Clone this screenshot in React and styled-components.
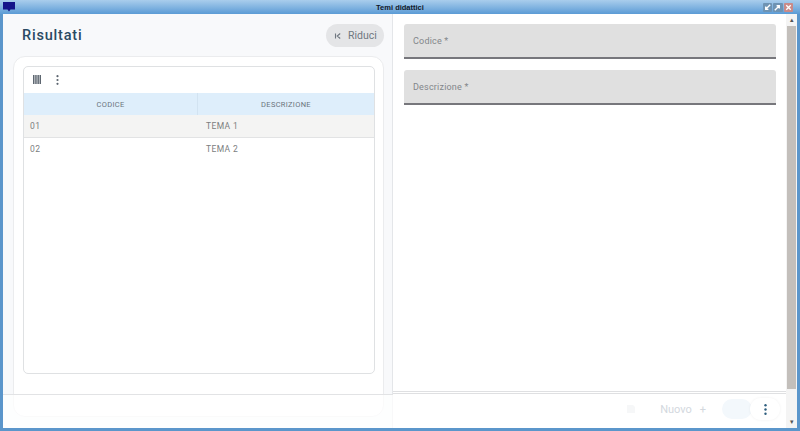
import React from 'react'
import styled, { createGlobalStyle } from 'styled-components'

const GlobalStyle = createGlobalStyle`
  html, body {
    margin: 0;
    padding: 0;
    width: 800px;
    height: 431px;
    overflow: hidden;
    background: #fff;
    font-family: Roboto, "Liberation Sans", sans-serif;
  }
  * { box-sizing: border-box; }
`

const rows = [
  { code: '01', name: 'TEMA 1', striped: true },
  { code: '02', name: 'TEMA 2' },
]

const App = () => (
  <Window>
    <GlobalStyle />
    <TitleBar>
      <AppIcon viewBox="0 0 12 10">
        <path d="M0 0h12v7.500H7.500L6 9.500 4.500 7.500H0z" fill="#14148a" />
      </AppIcon>
      <WindowTitle>Temi didattici</WindowTitle>
      <WindowButtons>
        <WindowButton><ArrowGlyph d="M8 2 3 7M3 4v3h3" /></WindowButton>
        <WindowButton><ArrowGlyph d="M2 8l5-5M4 3h3v3" /></WindowButton>
        <WindowButton $close><ArrowGlyph d="M2.500 2.500l5 5M7.500 2.500l-5 5" /></WindowButton>
      </WindowButtons>
    </TitleBar>

    <Body>
      <LeftPanel>
        <PanelHeader>
          <Title>Risultati</Title>
          <CollapseButton>
            <svg width="8" height="8" viewBox="0 0 8 8" fill="none" stroke="#6f7780" strokeWidth="1.100">
              <path d="M1.500 1.500v5M6.200 1.500 3.200 4l3 2.500" />
            </svg>
            Riduci
          </CollapseButton>
        </PanelHeader>
        <Card>
          <TableBox>
            <Toolbar>
              <svg width="8" height="9" viewBox="0 0 8 9" fill="#5d6670">
                <path d="M0 0h1.500v9H0zM2.200 0h1.500v9H2.200zM4.400 0h1.500v9H4.400zM6.500 0H8v9H6.500z" />
              </svg>
              <svg width="3" height="10" viewBox="0 0 3 10" fill="#5d6670">
                <circle cx="1.500" cy="1.200" r="1.100" />
                <circle cx="1.500" cy="5" r="1.100" />
                <circle cx="1.500" cy="8.800" r="1.100" />
              </svg>
            </Toolbar>
            <HeaderRow>
              <HeaderCell>CODICE</HeaderCell>
              <HeaderCell>DESCRIZIONE</HeaderCell>
            </HeaderRow>
            {rows.map(row => (
              <Row key={row.code} $striped={row.striped}>
                <Cell>{row.code}</Cell>
                <Cell>{row.name}</Cell>
              </Row>
            ))}
          </TableBox>
        </Card>
      </LeftPanel>

      <RightPanel>
        <Field>Codice *</Field>
        <Field>Descrizione *</Field>
      </RightPanel>

      <Scrollbar>
        <ScrollArrow>▴</ScrollArrow>
        <ScrollThumb />
        <ScrollArrow>▾</ScrollArrow>
      </Scrollbar>

      <Footer>
        <FooterLeft />
        <FooterRight>
          <FaintIcon viewBox="0 0 10 10">
            <path d="M1 1h6l2 2v6H1z" fill="#f6f7f8" />
          </FaintIcon>
          <FooterAction>Nuovo<span>+</span></FooterAction>
          <SaveGhost />
          <MoreButton>
            <svg width="3" height="11" viewBox="0 0 3 11" fill="#2f5f7f">
              <circle cx="1.500" cy="1.300" r="1.200" />
              <circle cx="1.500" cy="5.500" r="1.200" />
              <circle cx="1.500" cy="9.700" r="1.200" />
            </svg>
          </MoreButton>
        </FooterRight>
      </Footer>
    </Body>
  </Window>
)

export default App

const Window = styled.div`
  width: 800px;
  height: 431px;
  display: flex;
  flex-direction: column;
  background: #5b96cb;
`

const TitleBar = styled.div`
  position: relative;
  flex: 0 0 14px;
  display: flex;
  align-items: center;
  justify-content: space-between;
  padding: 0 7px 0 3px;
  background: linear-gradient(#a9cdec, #7fb2e0 55%, #5b9bd5);
`

const AppIcon = styled.svg`
  width: 12px;
  height: 10px;
`

const WindowTitle = styled.div`
  position: absolute;
  left: 0;
  right: 0;
  text-align: center;
  font-family: "Liberation Sans", sans-serif;
  font-size: 7.500px;
  font-weight: 700;
  color: #10182a;
`

const WindowButtons = styled.div`
  display: flex;
  gap: 1px;
`

const WindowButton = styled.div`
  width: 9.500px;
  height: 9px;
  border-radius: 1px;
  display: flex;
  justify-content: center;
  background: ${props => (props.$close ? '#c98a88' : '#6e93b3')};
`

const ArrowGlyph = ({ d }) => (
  <svg width="9" height="9" viewBox="0 0 10 10" fill="none" stroke="#fff" strokeWidth="1.500">
    <path d={d} />
  </svg>
)

const Body = styled.div`
  position: relative;
  flex: 1;
  min-height: 0;
  display: flex;
  margin: 0 3px 3px;
  background: #fff;
`

const LeftPanel = styled.div`
  flex: 0 0 390px;
  display: flex;
  flex-direction: column;
  padding: 10px 8px 0 10px;
  background: #f8f9fb;
  border-right: 1px solid #e4e6e9;
`

const PanelHeader = styled.div`
  flex: 0 0 32px;
  display: flex;
  align-items: flex-start;
  justify-content: space-between;
  padding-left: 9px;
`

const Title = styled.h1`
  margin: 0;
  padding-top: 1px;
  font-size: 14.500px;
  line-height: 22px;
  font-weight: 500;
  letter-spacing: 0.8px;
  color: #2a4a63;
`

const CollapseButton = styled.div`
  height: 23px;
  width: 58px;
  display: flex;
  align-items: center;
  gap: 6px;
  padding-left: 8px;
  border-radius: 12px;
  background: #e4e5e7;
  font-size: 10.500px;
  color: #6f7780;
`

const Card = styled.div`
  height: 361px;
  padding: 9px 8px 0 9px;
  background: #fff;
  border: 1px solid #ebecee;
  border-radius: 12px;
`

const TableBox = styled.div`
  height: 308px;
  background: #fff;
  border: 1px solid #dfe1e3;
  border-radius: 5px;
  overflow: hidden;
`

const Toolbar = styled.div`
  height: 26px;
  display: flex;
  align-items: center;
  gap: 15px;
  padding: 0 0 1px 9px;
`

const HeaderRow = styled.div`
  height: 22px;
  display: grid;
  grid-template-columns: 173px 1fr;
  background: #deeefb;
`

const HeaderCell = styled.div`
  display: flex;
  align-items: center;
  justify-content: center;
  font-size: 7.500px;
  letter-spacing: 0.3px;
  color: #6b747c;
  & + & {
    border-left: 1px solid #d2e3f1;
  }
`

const Row = styled.div`
  height: ${props => (props.$striped ? '23px' : '22px')};
  display: grid;
  grid-template-columns: 173px 1fr;
  align-items: center;
  background: ${props => (props.$striped ? '#f4f4f3' : '#fff')};
  border-bottom: ${props => (props.$striped ? '1px solid #e2e3e4' : 'none')};
`

const Cell = styled.div`
  padding-left: 6px;
  font-size: 8.500px;
  letter-spacing: 0.4px;
  color: #7b7d80;
  & + & {
    padding-left: 9px;
  }
`

const RightPanel = styled.div`
  flex: 1;
  display: flex;
  flex-direction: column;
  gap: 11px;
  padding: 10px 10px 0 11px;
`

const Field = styled.div`
  height: 35px;
  padding-top: 12px;
  padding-left: 9px;
  background: #e0e0e0;
  border-bottom: 2px solid #77777c;
  border-radius: 3px 3px 0 0;
  font-size: 9px;
  letter-spacing: 0.2px;
  color: #82868a;
`

const Scrollbar = styled.div`
  flex: 0 0 11px;
  display: flex;
  flex-direction: column;
  align-items: center;
  background: #f4f4f4;
`

const ScrollArrow = styled.div`
  flex: 0 0 12px;
  font-size: 7px;
  line-height: 12px;
  color: #555;
`

const ScrollThumb = styled.div`
  flex: 1;
  width: 9px;
  margin-bottom: 27px;
  background: #c3bfbb;
`

const Footer = styled.div`
  position: absolute;
  left: 0;
  right: 11px;
  bottom: 0;
  height: 37px;
  display: flex;
`

const FooterLeft = styled.div`
  flex: 0 0 390px;
  margin-top: 3px;
  background: rgba(255, 255, 255, 0.72);
  border-top: 1px solid #e2e3e5;
`

const FooterRight = styled.div`
  flex: 1;
  display: flex;
  align-items: center;
  justify-content: flex-end;
  padding: 0 6px 4px 0;
  background: #fff;
  border-top: 3px double #dfe0e2;
`

const FaintIcon = styled.svg`
  width: 10px;
  height: 10px;
  margin-right: 24px;
`

const FooterAction = styled.div`
  display: flex;
  gap: 8px;
  margin-right: 16px;
  font-size: 11px;
  color: #d3d8de;
`

const SaveGhost = styled.div`
  width: 30px;
  height: 20px;
  margin-right: -2px;
  border-radius: 10px;
  background: #f3f8fc;
`

const MoreButton = styled.div`
  width: 30px;
  height: 22px;
  display: flex;
  align-items: center;
  justify-content: center;
  border-radius: 11px;
  background: #fff;
  box-shadow: 0 0 3px rgba(0, 0, 0, 0.06);
`
